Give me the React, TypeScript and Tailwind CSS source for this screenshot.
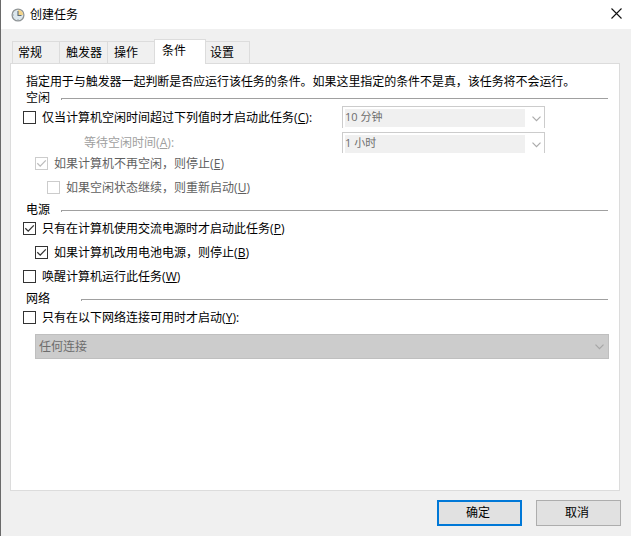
import React from "react";

type Tone = "normal" | "disabled";

function Check({ checked, tone = "normal" }: { checked?: boolean; tone?: Tone }) {
  return (
    <span
      className={`flex size-[13px] shrink-0 items-center justify-center border bg-white ${
        tone === "disabled" ? "border-[#cccccc] text-[#bcbcbc]" : "border-[#333333] text-[#333333]"
      }`}
    >
      {checked && (
        <svg width="11" height="11" viewBox="0 0 11 11" fill="none" stroke="currentColor" strokeWidth="1.3">
          <path d="M1.3 5.2 4.2 8.1 9.8 2.4" />
        </svg>
      )}
    </span>
  );
}

function Key({ k, colon }: { k: string; colon?: boolean }) {
  return (
    <span className="tracking-[0.1px]">
      (<span className="underline decoration-1 underline-offset-1">{k}</span>){colon && ":"}
    </span>
  );
}

function Option({
  text,
  k,
  colon,
  checked,
  tone = "normal",
  className = "",
}: {
  text: string;
  k: string;
  colon?: boolean;
  checked?: boolean;
  tone?: Tone;
  className?: string;
}) {
  return (
    <label className={`flex h-6 items-center gap-1.5 ${tone === "disabled" ? "text-[#5f5f5f]" : "text-black"} ${className}`}>
      <Check checked={checked} tone={tone} />
      <span className="mt-0.5">
        {text}
        <Key k={k} colon={colon} />
      </span>
    </label>
  );
}

function Section({ title, wide }: { title: string; wide?: boolean }) {
  return (
    <div className={`flex h-4 items-center pl-[15px] pr-[11px] ${wide ? "gap-[31px]" : "gap-[11px]"}`}>
      <h2 className="w-6 leading-4">{title}</h2>
      <div className="mt-0.5 h-0.5 grow border-l border-t border-[#a0a0a0]" />
    </div>
  );
}

function Chevron({ color }: { color: string }) {
  return (
    <svg width="9" height="6" viewBox="0 0 9 6" fill="none" stroke={color} strokeWidth="1.2">
      <path d="M.5.7 4.5 4.7 8.5.7" />
    </svg>
  );
}

function Combo({ value, className = "" }: { value: string; className?: string }) {
  return (
    <div
      className={`flex w-[203px] items-start border-x border-t border-[#cccccc] bg-white pl-0.5 pt-0.5 text-[11px] text-[#6d6d6d] ${className}`}
    >
      <span className="h-[18px] w-[180px] bg-[#f0f0f0] leading-[16px]">{value}</span>
      <span className="ml-[7px] mt-[7px]">
        <Chevron color="#ababab" />
      </span>
    </div>
  );
}

function Tab({ label, className = "" }: { label: string; className?: string }) {
  return (
    <div className={`h-[22px] border-r border-t border-[#dcdcdc] bg-[#f0f0f0] leading-[22px] ${className}`}>{label}</div>
  );
}

export default function App() {
  return (
    <div className="h-[536px] w-[631px] overflow-hidden whitespace-nowrap border-l border-[#6a6a6a] bg-[#f0f0f0] font-['Open_Sans','Noto_Sans_CJK_SC',sans-serif] text-[12px] text-black">
      <header className="flex h-[29px] items-center bg-white pl-[10px] pr-[9px]">
        <svg width="14" height="14" viewBox="0 0 14 14" fill="none">
          <circle cx="7" cy="7" r="5.9" fill="#dce7ed" stroke="#8f9496" strokeWidth="1.3" />
          <path d="M7 7V1.8A5.2 5.2 0 0 1 12.2 7Z" fill="#f3d48a" />
          <path d="M7 3v4.5h3.5" stroke="#596a77" strokeWidth="1.1" />
          <path d="M2 7h1M7 11v1" stroke="#9aabb2" />
        </svg>
        <h1 className="ml-[5px] leading-[28px]">创建任务</h1>
        <svg className="mb-[3px] ml-auto" width="11" height="11" viewBox="0 0 11 11" stroke="#111" strokeWidth="1.1">
          <path d="M.5.5 10.5 10.5M10.5.5.5 10.5" />
        </svg>
      </header>

      <nav className="flex h-[34px] items-end pl-[11px]">
        <Tab label="常规" className="w-12 border-l pl-[5px]" />
        <Tab label="触发器" className="w-12 pl-1.5" />
        <Tab label="操作" className="w-[46px] border-r-0 pl-1.5" />
        <div className="z-10 -mb-px h-[25px] w-[52px] border-x border-t border-[#dcdcdc] bg-white pl-[7px] leading-[22px]">条件</div>
        <Tab label="设置" className="w-11 pl-1" />
      </nav>

      <main className="ml-[9px] flex h-[428px] w-[610px] flex-col border border-[#dcdcdc] bg-white">
        <p className="mt-[9px] h-[17px] pl-[15px] leading-[17px] tracking-[-0.06px]">
          指定用于与触发器一起判断是否应运行该任务的条件。如果这里指定的条件不是真，该任务将不会运行。
        </p>
        <Section title="空闲" />
        <div className="flex h-[26px] pl-3">
          <Option text="仅当计算机空闲时间超过下列值时才启动此任务" k="C" colon className="-mt-[1px] w-[319px]" />
          <Combo value="10 分钟" className="h-[22px]" />
        </div>
        <div className="flex h-[19px] pl-[73px]">
          <span className="w-[258px] leading-[21px] text-[#a0a0a0]">
            等待空闲时间
            <Key k="A" colon />
          </span>
          <Combo value="1 小时" className="h-[21px]" />
        </div>
        <Option text="如果计算机不再空闲，则停止" k="E" checked tone="disabled" className="ml-6" />
        <Option text="如果空闲状态继续，则重新启动" k="U" tone="disabled" className="mb-[3px] ml-9" />
        <Section title="电源" />
        <Option text="只有在计算机使用交流电源时才启动此任务" k="P" checked className="-mt-0.5 ml-3" />
        <Option text="如果计算机改用电池电源，则停止" k="B" checked className="ml-6" />
        <Option text="唤醒计算机运行此任务" k="W" className="mb-[3px] ml-3" />
        <Section title="网络" wide />
        <Option text="只有在以下网络连接可用时才启动" k="Y" colon className="-mt-0.5 ml-3" />
        <div className="ml-6 mt-[5px] flex h-[25px] w-[574px] items-center justify-between border border-[#bfbfbf] bg-[#cccccc] pl-[3px] pr-1 text-[#6d6d6d]">
          <span className="leading-[23px]">任何连接</span>
          <Chevron color="#a6a6a6" />
        </div>
      </main>

      <footer className="mt-[9px] flex justify-end gap-[14px] pr-[10px]">
        <button className="h-[26px] w-[85px] border-2 border-[#0078d7] bg-[#e1e1e1] pr-[3px] leading-[22px]">确定</button>
        <button className="h-[26px] w-[85px] border border-[#adadad] bg-[#e1e1e1] pr-[3px] leading-[24px]">取消</button>
      </footer>
    </div>
  );
}
